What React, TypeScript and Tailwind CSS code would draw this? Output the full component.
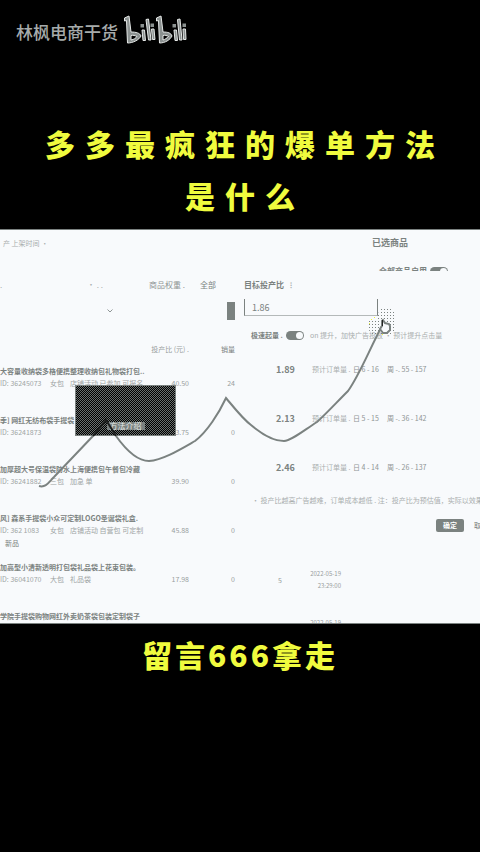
import { ReactNode } from "react";

const cjk = "font-['Noto_Sans_CJK_SC',sans-serif]";

const products = [
  { title: "大容量收纳袋多格便携整理收纳包礼物袋打包..", meta: "ID: 36245073", tag: "女包", more: "店铺活动 已参加 可报名", price: "40.50", sales: "24" },
  { title: "季] 网红无纺布袋手提袋", meta: "ID: 36241873", tag: "", more: "", price: "43.75", sales: "0" },
  { title: "加厚超大号保温袋防水上海便携包午餐包冷藏", meta: "ID: 36241882", tag: "三包", more: "加急 单", price: "39.90", sales: "0" },
  { title: "风] 森系手提袋小众可定制LOGO圣诞袋礼盒.", meta: "ID: 362 1083", tag: "女包", more: "店铺活动 自营包 可定制", price: "45.88", sales: "0", note: "新品" },
  { title: "加高型小清新透明打包袋礼品袋上花束包装。", meta: "ID: 36041070", tag: "大包", more: "礼品袋", price: "17.98", sales: "0" },
  { title: "学院手提袋购物网红外卖奶茶袋包装定制袋子", meta: "", tag: "", more: "", price: "", sales: "" },
];

const options = [
  { ratio: "1.89", day: "6 - 16", range: "55 - 157" },
  { ratio: "2.13", day: "5 - 15", range: "36 - 142" },
  { ratio: "2.46", day: "4 - 14", range: "26 - 137" },
];

function Toggle({ label }: { label: string }) {
  return (
    <input
      type="checkbox"
      role="switch"
      defaultChecked
      aria-label={label}
      className="h-[9px] w-[18px] shrink-0 appearance-none rounded-full bg-[#7b8280] after:ml-[10px] after:mt-px after:block after:size-[7px] after:rounded-full after:bg-[#f8fafc]"
    />
  );
}

function BiliLogo() {
  return (
    <svg viewBox="0 0 64 30" className="h-[30px] w-16" fill="none" aria-label="bilibili">
      <g fill="#8b9190" stroke="#e6e9e8" strokeWidth="1" strokeLinejoin="round">
        <path d="M0.500 3 5 1 7 17C12 17 16 18 17 21C15 25 9 28 3.500 28L2.500 5.500 0.500 6ZM7 20.500V25C10 24.500 12 23 13 21.500C11 20.500 9 20 7 20.500Z" fillRule="evenodd" />
        <path d="M32.500 3 37 1 39 17C44 17 47 18 48 21C46 25 41 28 35.500 28L34.500 5.500 32.500 6ZM39 20.500V25C41 24.500 43 23 44.500 21.500C43 20.500 41 20 39 20.500Z" fillRule="evenodd" />
        <path d="M18 15h2.500l1 10.500H19ZM22 4.500 24.500 4 27 25h-2.500ZM27.500 14H30l1 10.500h-2.500Z" />
        <path d="M50 15h2.500l1 10.500H51ZM53.500 4.500 56 4 58 25h-2.500ZM59 14h2.500l.5 10.500h-2.500Z" />
      </g>
      <path d="M16.500 9h3.500v3.500h-3.500zM26.500 8.500H30V12h-3.500zM48.500 9H52v3.500h-3.500zM58.500 8.500H62V12h-3.500z" fill="#8b9190" />
    </svg>
  );
}

function Cursor() {
  return (
    <svg viewBox="0 0 32 36" className="absolute left-[366px] top-[76px] h-9 w-8" fill="none">
      <defs>
        <pattern id="dots" width="3" height="3" patternUnits="userSpaceOnUse">
          <rect width="1" height="1" fill="#7b8280" />
        </pattern>
      </defs>
      <path d="M14 1h9l7 7v15l-6 7H8l-6-7v-9h9z" fill="url(#dots)" />
      <path d="M5 13h1v1H5zM8 11h1v1H8zM3 17h1v1H3zM16 28h1v1h-1z" fill="#eef53f" />
      <path
        d="M17 27l-3-4 2-3V15l1-1 2 3 4 1 1 2v4l-3 3z"
        fill="#f8fafc"
        stroke="#7b8280"
        strokeWidth="2"
      />
      <path d="M16.500 20v-6" stroke="#222" />
    </svg>
  );
}

function Faint({ children, className = "" }: { children: ReactNode; className?: string }) {
  return <span className={`text-[#a9aeae] ${className}`}>{children}</span>;
}

function ProductList() {
  return (
    <section className="w-60 shrink-0">
      <div className="flex h-[26px] items-center pl-[3px]">
        <Faint>产 上架时间 ·</Faint>
      </div>
      <div className="mt-[19px] flex h-5 items-center text-[8px]">
        <Faint className="w-[87px]">.</Faint>
        <Faint className="w-[62px]">· . .</Faint>
        <span className="w-[51px] text-[#8f9595]">商品权重 .</span>
        <span>全部</span>
      </div>
      <div className="mt-[6px] flex h-5 items-center justify-between pl-[107px] pr-[5px]">
        <svg viewBox="0 0 6 4" className="h-1 w-[6px]" fill="none" stroke="#8f9595">
          <path d="M0.500 0.500 3 3 5.500 0.500" />
        </svg>
        <span className="h-[18px] w-2 bg-[#7b8280]" />
      </div>
      <table className="mt-[18px] w-[235px] table-fixed border-collapse leading-3">
        <thead>
          <tr className="h-[26px] align-top leading-5">
            <th className="w-[147px]" />
            <th className="w-[42px] whitespace-nowrap text-right font-normal text-[#989e9e]">投产比 (元) .</th>
            <th className="w-[46px] text-right font-normal">销量</th>
          </tr>
        </thead>
        <tbody>
          {products.map((p) => (
            <tr key={p.title} className="h-[49px] align-top">
              <td className="whitespace-nowrap">
                <div className="font-bold">{p.title}</div>
                <div className="flex text-[#a0a5a5]">
                  <span className="w-[50px]">{p.meta}</span>
                  <span className="w-5">{p.tag}</span>
                  <span>{p.more}</span>
                </div>
                {p.note && <div className="pl-[5px] pt-px">{p.note}</div>}
              </td>
              <td className="pt-3 text-right text-[#989e9e]">{p.price}</td>
              <td className="pt-3 text-right text-[#989e9e]">{p.sales}</td>
            </tr>
          ))}
        </tbody>
      </table>
    </section>
  );
}

function TargetPanel() {
  return (
    <section className="min-w-0 grow pl-1">
      <h2 className="flex h-[26px] items-center pl-32 text-[9px] font-bold">已选商品</h2>
      <div className="mt-[9px] h-[6px] overflow-hidden pl-[135px]">
        <label className="flex h-3 items-center gap-[3px] text-[8px] font-bold">
          全部商品启用
          <Toggle label="全部商品启用" />
        </label>
      </div>
      <label htmlFor="target" className="mt-1 flex h-5 items-center gap-[6px] text-[8px] font-bold">
        目标投产比 <Faint>⁝</Faint>
      </label>
      <input
        id="target"
        defaultValue="1.86"
        className="mt-1 block h-[17px] w-[134px] border-x border-b border-[#7b8280] border-b-[#b4b9b9] bg-transparent pl-[7px] text-[9px] outline-none"
      />
      <label className="mt-[9px] flex h-5 items-center whitespace-nowrap pl-[7px]">
        <span className="w-[35px] font-bold">极速起量 .</span>
        <Toggle label="极速起量" />
        <Faint className="pl-[6px]">on 提升，加快广告投放 · 预计提升点击量</Faint>
      </label>
      <ul>
        {options.map((o) => (
          <li key={o.ratio} className="flex h-[49px] items-center whitespace-nowrap pl-8">
            <strong className="w-9 text-[9px]">{o.ratio}</strong>
            <Faint className="w-[41px]">预计订单量 .</Faint>
            <span className="w-[34px] text-[#8f9595]">日 {o.day}</span>
            <span className="text-[#8f9595]">周 -. {o.range}</span>
          </li>
        ))}
      </ul>
      <p className="flex h-4 items-center whitespace-nowrap pl-2">
        <Faint>· 投产比越高广告越难，订单成本越低 . 注：投产比为预估值，实际以效果为准</Faint>
      </p>
      <div className="mt-[11px] flex items-center gap-[10px] overflow-hidden whitespace-nowrap pl-48">
        <button className="h-[13px] w-7 shrink-0 rounded-[2px] bg-[#7b8280] font-bold leading-[13px] text-white">确定</button>
        <button className="leading-[13px]">取消</button>
      </div>
      <div className="mt-9 flex h-[49px] text-[#989e9e]">
        <span className="w-[53px] pl-[34px] leading-6">5</span>
        <time className="w-11 text-right text-[6px] leading-3">
          2022-05-19
          <br />
          23:29:00
        </time>
      </div>
      <time className="block w-[97px] text-right text-[6px] leading-3 text-[#989e9e]">2022-05-19</time>
    </section>
  );
}

export default function App() {
  return (
    <main className={`min-h-screen overflow-hidden bg-black ${cjk}`}>
      <header className="flex h-[60px] items-center gap-[6px] pl-4 text-[17px] font-medium leading-6 text-[#a6abaa]">
        <span className="pt-1">林枫电商干货</span>
        <BiliLogo />
      </header>
      <h1 className="mx-auto mt-[57px] max-w-[420px] pl-[10px] text-center text-[30px] font-black leading-[52px] tracking-[10px] text-[#f0fb3e]">
        多多最疯狂的爆单方法是什么
      </h1>
      <div className="relative mt-2 flex h-[395px] overflow-hidden border-y border-[#7b8280] bg-[#f8fafc] text-[7px] text-[#7b8280]">
        <ProductList />
        <TargetPanel />
        <div className="absolute left-[75px] top-[155px] flex h-[51px] w-[101px] items-end justify-center border border-[#7b8280] bg-[repeating-conic-gradient(#000_0_25%,#6a706e_0_50%)] bg-[length:2px_2px] pb-[5px]">
          <span className="bg-[#7b8280] px-[3px] text-[8px] leading-[8px] text-[#e8ebea]">方法介绍</span>
        </div>
        <svg viewBox="0 0 480 395" className="pointer-events-none absolute left-0 top-0 h-[395px] w-[480px]" fill="none" stroke="#7b8280" strokeWidth="2">
          <path d="M39 256C46 258 49 252 54 247L93 206" />
          <path d="M93 206 106 190 116 206" stroke="#1c1e1d" />
          <path d="M116 206C126 220 137 231 149 231C163 230 181 219 195 211C207 202 219 183 226 168C236 180 243 189 251 195C264 206 275 211 284 211C291 211 303 201 317 192C327 183 336 173 348 161C360 144 370 118 382 96" />
        </svg>
        <Cursor />
      </div>
      <h2 className="mt-[6px] text-center text-[30px] font-black leading-[48px] tracking-[3px] text-[#f0fb3e]">留言666拿走</h2>
    </main>
  );
}
